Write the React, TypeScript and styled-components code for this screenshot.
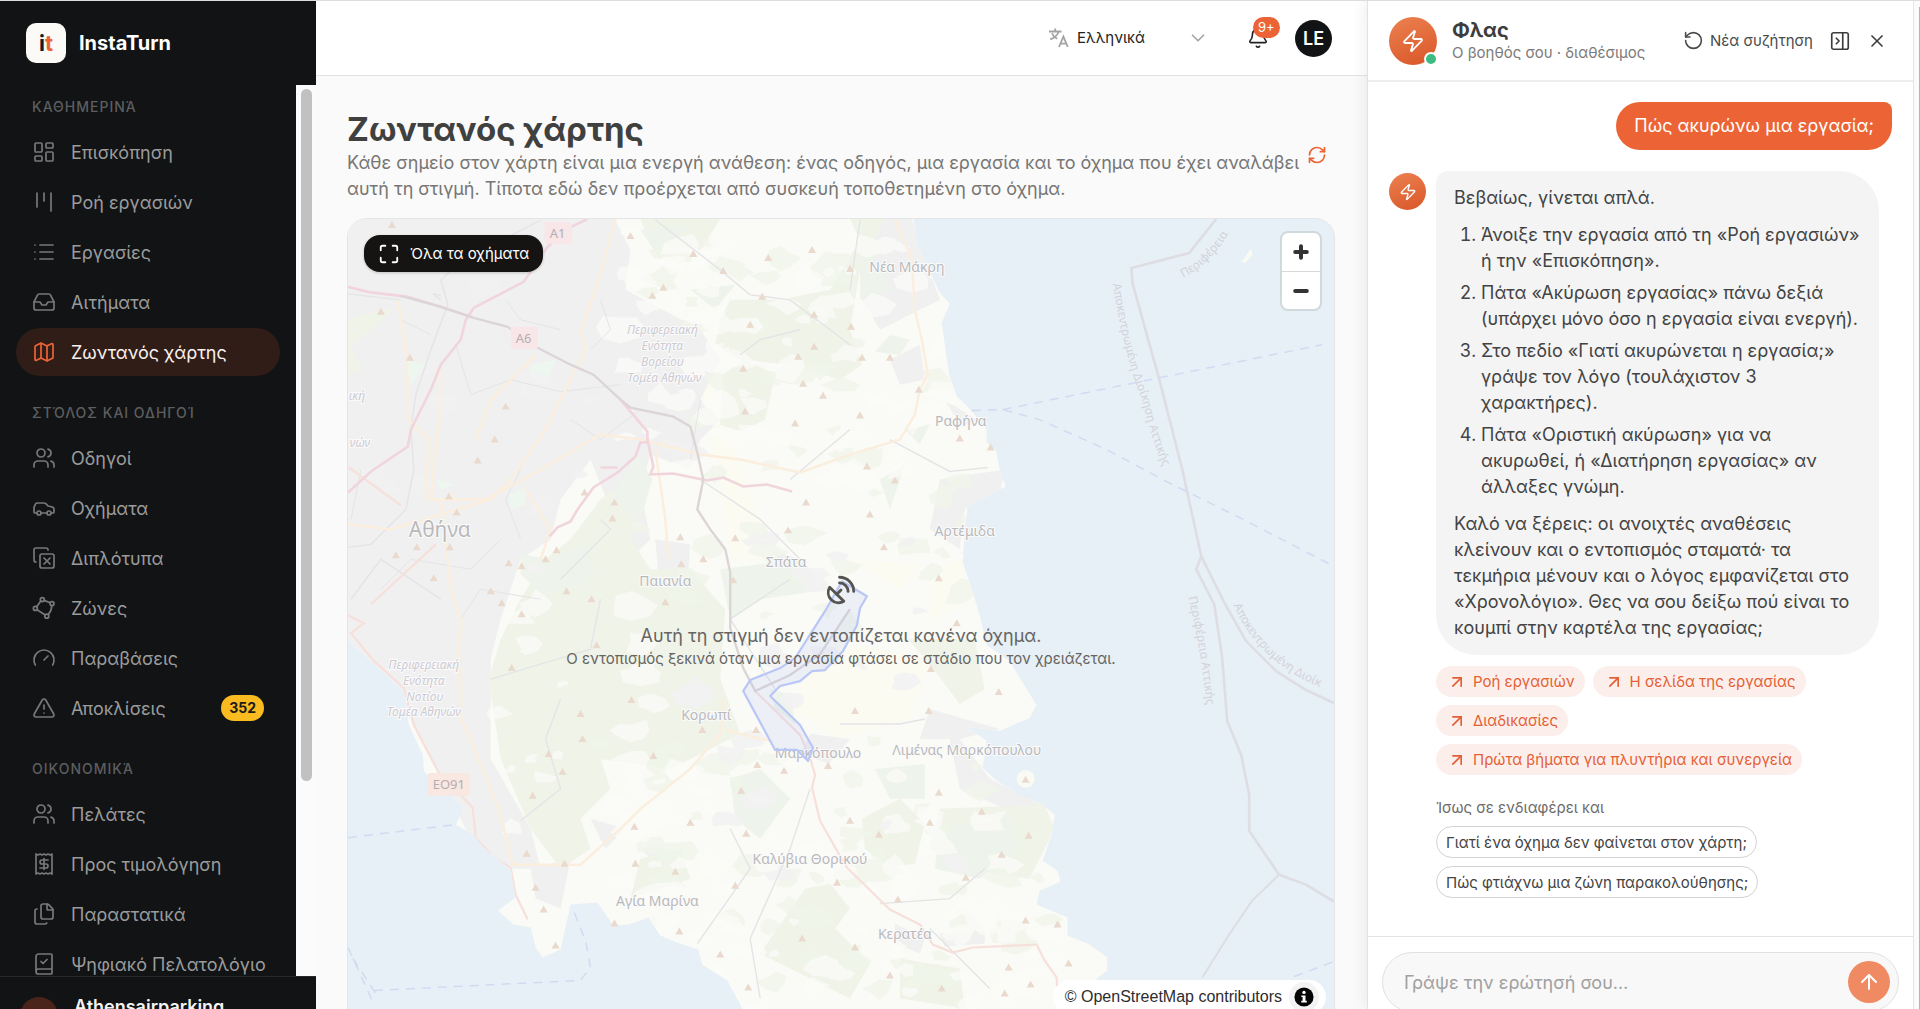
import React from "react";
import styled, { createGlobalStyle, css } from "styled-components";
import {
  ArrowUp,
  ArrowUpRight,
  Bell,
  BookCheck,
  Car,
  ChevronDown,
  CopyX,
  Files,
  Gauge,
  Inbox,
  LayoutDashboard,
  List,
  Map as MapIcon,
  Maximize,
  PanelRightClose,
  Receipt,
  RefreshCw,
  RotateCcw,
  SatelliteDish,
  TriangleAlert,
  Users,
  X,
  Zap,
} from "lucide-react";

const accent = "#ec6435";
const uiFont = `Inter, "Open Sans", sans-serif`;

const GlobalStyle = createGlobalStyle`
  *, *::before, *::after { box-sizing: border-box; }
  body { margin: 0; font-family: ${uiFont}; font-size: 18px; color: #434343; background: #fafafa; }
  button, input, select { font: inherit; color: inherit; margin: 0; }
  button { border: 0; padding: 0; background: none; cursor: pointer; }
  h1, h2, p, ol, ul { margin: 0; padding: 0; }
  a { color: inherit; text-decoration: none; }
  svg { flex: none; display: block; }
`;

/* ---------- frame ---------- */

const Shell = styled.div`
  display: flex;
  height: 100vh;
  overflow: hidden;
  border-top: 1px solid #dcdedd;
`;

/* ---------- sidebar ---------- */

const Sidebar = styled.aside`
  flex: 0 0 316px;
  min-width: 0;
  display: flex;
  flex-direction: column;
  background: #111315;
  color: #9b9b9c;
`;

const Brand = styled.a`
  flex: 0 0 84px;
  display: flex;
  align-items: center;
  gap: 13px;
  padding: 0 26px;
  font-size: 20px;
  font-weight: 700;
  color: #fff;
`;

const BrandMark = styled.span`
  display: grid;
  grid-auto-flow: column;
  place-content: center;
  width: 40px;
  height: 40px;
  border-radius: 10px;
  background: #fbfaf7;
  color: #16182a;
  font-size: 22px;
  line-height: 24px;
`;

const BrandAccent = styled.span`
  color: ${accent};
`;

const NavScroll = styled.div`
  flex: 1;
  min-height: 0;
  display: flex;
`;

const Nav = styled.nav`
  flex: 1;
  min-width: 0;
  overflow: hidden;
  display: flex;
  flex-direction: column;
  gap: 15px;
  padding: 0 16px;
`;

const Track = styled.div`
  flex: 0 0 20px;
  padding: 4px 4px 0 5px;
  background: #fbfbfb;
`;

const Thumb = styled.div`
  height: 78%;
  border-radius: 6px;
  background: #c1c1c1;
`;

const SectionTitle = styled.h2`
  padding-left: 16px;
  font-size: 14px;
  font-weight: 500;
  line-height: 43px;
  letter-spacing: 1px;
  color: #5d5e5f;
`;

const NavList = styled.ul`
  display: grid;
  gap: 2px;
  list-style: none;
`;

const NavLink = styled.a<{ $active?: boolean }>`
  display: flex;
  align-items: center;
  gap: 15px;
  height: 48px;
  padding: 0 16px;
  border-radius: 24px;
  white-space: nowrap;
  svg { color: #77787a; }
  ${(p) =>
    p.$active &&
    css`
      background: #301d18;
      color: #f8f1ee;
      svg { color: ${accent}; }
    `}
`;

const CountPill = styled.span`
  margin-left: auto;
  padding: 0 8px;
  border-radius: 13px;
  background: #f9bb20;
  color: #1b1a16;
  font-size: 14px;
  font-weight: 700;
  line-height: 26px;
`;

const Account = styled.div`
  flex: 0 0 33px;
  display: flex;
  align-items: flex-start;
  gap: 16px;
  height: 33px;
  padding: 20px 20px 0;
  overflow: hidden;
  border-top: 1px solid #26282a;
  color: #f4f4f4;
  font-weight: 600;
  line-height: 20px;
`;

const AccountAvatar = styled.span`
  flex: none;
  width: 38px;
  height: 38px;
  border-radius: 50%;
  background: #4a231b;
`;

/* ---------- main column ---------- */

const Main = styled.main`
  flex: 1;
  min-width: 0;
  display: flex;
  flex-direction: column;
  background: #fafafa;
`;

const TopBar = styled.header`
  flex: 0 0 75px;
  display: flex;
  align-items: center;
  justify-content: flex-end;
  padding: 0 35px;
  background: #fff;
  border-bottom: 1px solid #e3e3e3;
`;

const Language = styled.label`
  display: grid;
  grid-template-columns: 28px 132px;
  align-items: center;
  margin-right: 38px;
  color: #a3a3a3;
`;

const LanguageSelect = styled.select`
  appearance: none;
  grid-row: 1;
  grid-column: 2;
  border: 0;
  padding: 0;
  background: transparent;
  color: #222;
  font-size: 15px;
  line-height: 24px;
`;

const LanguageChevron = styled(ChevronDown)`
  grid-row: 1;
  grid-column: 2;
  justify-self: end;
  pointer-events: none;
`;

const BellButton = styled.button`
  position: relative;
  margin-right: 26px;
  color: #222;
`;

const BellBadge = styled.span`
  position: absolute;
  left: 6px;
  top: -10px;
  padding: 0 5px;
  border-radius: 11px;
  background: ${accent};
  color: #fff;
  font-size: 13px;
  line-height: 21px;
`;

const UserAvatar = styled.button`
  width: 37px;
  height: 37px;
  border-radius: 50%;
  background: #111315;
  color: #fff;
  font-size: 18px;
  font-weight: 600;
`;

const Page = styled.div`
  flex: 1;
  min-height: 0;
  overflow: hidden;
  padding: 32px 32px 0 31px;
`;

const PageHead = styled.div`
  display: flex;
  align-items: center;
  justify-content: space-between;
  gap: 4px;
  padding-right: 8px;
  margin-bottom: 16px;
`;

const Title = styled.h1`
  font-size: 33px;
  font-weight: 700;
  line-height: 42px;
  color: #40403f;
`;

const Lead = styled.p`
  line-height: 26px;
  color: #777674;
`;

const IconButton = styled.button<{ $accent?: boolean }>`
  color: ${(p) => (p.$accent ? accent : "#3c3c3c")};
`;

/* ---------- map ---------- */

const MapFrame = styled.section`
  position: relative;
  height: calc(100vh - 200px);
  overflow: hidden;
  border: 1px solid #e4e6e6;
  border-radius: 20px;
  display: grid;
  place-items: center;
  background: #e7f0f6;
`;

const MapArt = styled.svg`
  position: absolute;
  inset: 0;
  width: 100%;
  height: 100%;
`;

const FitButton = styled.button`
  position: absolute;
  left: 16px;
  top: 16px;
  display: flex;
  align-items: center;
  gap: 10px;
  height: 37px;
  padding: 0 14px;
  border-radius: 16px;
  background: #161412;
  color: #fff;
  font-size: 15px;
  box-shadow: 0 1px 3px rgba(0, 0, 0, 0.2);
`;

const ZoomBox = styled.div`
  position: absolute;
  right: 12px;
  top: 12px;
  width: 42px;
  display: grid;
  border: 2px solid #d2d9dc;
  border-radius: 8px;
  background: #fff;
`;

const ZoomButton = styled.button`
  display: grid;
  place-items: center;
  height: 38px;
  & + & { border-top: 1px solid #d8d8d8; }
`;

const EmptyState = styled.div`
  position: relative;
  display: grid;
  justify-items: center;
  padding-bottom: 4px;
  color: #666563;
  text-align: center;
  svg { margin-bottom: 16px; color: #555450; }
`;

const EmptyTitle = styled.p`
  line-height: 26px;
`;

const EmptyText = styled.p`
  font-size: 15px;
  line-height: 20px;
`;

const Attribution = styled.div`
  position: absolute;
  right: 8px;
  bottom: 12px;
  display: flex;
  align-items: center;
  gap: 12px;
  height: 34px;
  padding: 0 12px;
  border-radius: 17px;
  background: #fff;
  color: #2d2d2d;
  font-family: "Liberation Sans", Arial, sans-serif;
  font-size: 16px;
`;

const InfoButton = styled.button`
  border-radius: 50%;
  box-shadow: 0 0 0 5px #f3f3f3;
`;

/* ---------- assistant panel ---------- */

const Panel = styled.aside`
  flex: 0 0 553px;
  display: flex;
  background: #fff;
  border-left: 1px solid #e2e2e2;
  box-shadow: 0 0 16px rgba(0, 0, 0, 0.09);
  position: relative;
`;

const PanelColumn = styled.div`
  flex: 1;
  min-width: 0;
  display: flex;
  flex-direction: column;
`;

const PageRail = styled.div`
  flex: 0 0 7px;
  padding: 6px 0 0 5px;
  border-left: 1px solid #e4e4e4;
  background: #fbfbfb;
`;

const PageRailThumb = styled.div`
  height: 100%;
  border-left: 1px solid #b4b4b4;
`;

const PanelHead = styled.header`
  flex: 0 0 81px;
  display: flex;
  align-items: center;
  padding: 0 26px 0 21px;
  border-bottom: 2px solid #eeeeee;
`;

const BotAvatar = styled.span<{ $size: number }>`
  position: relative;
  flex: none;
  display: grid;
  place-items: center;
  width: ${(p) => p.$size}px;
  height: ${(p) => p.$size}px;
  border-radius: 50%;
  background: linear-gradient(160deg, #ec8150, #d95628);
  color: #fff;
`;

const OnlineDot = styled.span`
  position: absolute;
  right: -1px;
  bottom: -1px;
  width: 14px;
  height: 14px;
  border: 2px solid #fff;
  border-radius: 50%;
  background: #3dbb83;
`;

const BotNames = styled.div`
  flex: 1;
  margin-left: 15px;
  white-space: nowrap;
`;

const BotName = styled.h2`
  font-size: 20px;
  line-height: 24px;
  font-weight: 700;
  color: #3d3d3d;
`;

const BotStatus = styled.p`
  font-size: 15px;
  line-height: 22px;
  color: #7c7b79;
`;

const PanelActions = styled.div`
  display: flex;
  align-items: center;
  gap: 16px;
`;

const NewChat = styled.button`
  display: flex;
  align-items: center;
  gap: 6px;
  color: #4a4a4a;
  font-size: 15px;
`;

const Thread = styled.div`
  flex: 1;
  min-height: 0;
  overflow: hidden;
  display: flex;
  flex-direction: column;
  gap: 21px;
  padding: 20px 21px;
`;

const UserBubble = styled.p`
  align-self: flex-end;
  padding: 11px 18px;
  border-radius: 24px 8px 24px 24px;
  background: ${accent};
  color: #fff;
  line-height: 26px;
`;

const BotTurn = styled.div`
  display: flex;
  align-items: flex-start;
  gap: 10px;
  > :first-child { margin-top: 2px; }
`;

const BotContent = styled.div`
  flex: 1;
  min-width: 0;
`;

const BotBubble = styled.div`
  display: grid;
  gap: 11px;
  margin-right: 13px;
  padding: 14px 18px;
  border-radius: 12px 40px 40px 40px;
  background: #f4f4f4;
  line-height: 26px;
`;

const Steps = styled.ol`
  display: grid;
  gap: 6px;
  padding-left: 27px;
`;

const ChipRow = styled.div`
  display: flex;
  flex-wrap: wrap;
  gap: 8px;
`;

const LinkChips = styled(ChipRow)`
  margin-top: 11px;
`;

const LinkChip = styled.a`
  display: flex;
  align-items: center;
  gap: 6px;
  height: 31px;
  padding: 0 10px 0 11px;
  border-radius: 16px;
  background: #fcefeb;
  color: #e45f36;
  font-size: 15px;
`;

const SuggestLabel = styled.p`
  margin: 22px 0 7px;
  font-size: 15px;
  line-height: 22px;
  color: #6d6c6a;
`;

const SuggestChip = styled.button`
  height: 32px;
  padding: 0 9px;
  border: 1px solid #d3d3d3;
  border-radius: 16px;
  background: #fff;
  font-size: 15px;
`;

const Composer = styled.form`
  flex: 0 0 73px;
  height: 73px;
  overflow: hidden;
  padding: 15px 14px 0;
  border-top: 1px solid #e3e3e3;
`;

const ComposerField = styled.div`
  display: flex;
  align-items: center;
  height: 60px;
  padding: 0 8px 0 21px;
  border: 1px solid #e1e1e1;
  border-radius: 30px;
  background: #f8f8f8;
`;

const ComposerInput = styled.input`
  flex: 1;
  min-width: 0;
  border: 0;
  outline: 0;
  padding: 0;
  background: transparent;
  &::placeholder { color: #a0a0a0; opacity: 1; }
`;

const SendButton = styled.button`
  display: grid;
  place-items: center;
  width: 42px;
  height: 42px;
  border-radius: 50%;
  background: #f08a63;
  color: #fff;
`;

/* ---------- small drawings ---------- */

const ZoneIcon = ({ size = 24, strokeWidth = 1.7 }: { size?: number; strokeWidth?: number }) => (
  <svg width={size} height={size} viewBox="0 0 24 24" fill="none" stroke="currentColor" strokeWidth={strokeWidth} strokeLinecap="round">
    <circle cx="10.3" cy="3.6" r="2" />
    <circle cx="20" cy="7.6" r="2" />
    <circle cx="14.8" cy="20.2" r="2" />
    <circle cx="3.4" cy="12.4" r="2" />
    <path d="M12.2 4.4 18 6.8M8.8 5.1 4.7 10.8M5 13.8l8.2 5.2M19.8 9.8c-.1 3.4-1.4 6.4-3.6 8.8" />
  </svg>
);

const KanbanIcon = ({ size = 24, strokeWidth = 1.7 }: { size?: number; strokeWidth?: number }) => (
  <svg width={size} height={size} viewBox="0 0 24 24" fill="none" stroke="currentColor" strokeWidth={strokeWidth} strokeLinecap="round">
    <path d="M5 3v14M12 3v8M19 3v18" />
  </svg>
);

const TranslateIcon = () => (
  <svg width="20" height="20" viewBox="0 0 20 20" fill="none" stroke="currentColor" strokeWidth="1.8">
    <path d="M0 3.5h12.5M6.2.5v3M9.8 3.5C8.6 7 5.5 9.8 1.2 11.4M3 5.2c1 2.6 2.6 4.3 5.2 5.6" />
    <path d="m10 19 4.4-10.4L18.8 19M11.4 15.6h6" />
  </svg>
);

const InfoGlyph = () => (
  <svg width="20" height="20" viewBox="0 0 20 20">
    <circle cx="10" cy="10" r="9.6" fill="#050505" />
    <circle cx="10" cy="5.4" r="1.7" fill="#fff" />
    <path d="M7.4 8.4h4.1v5.4h1.3v1.7H7.3v-1.7h1.3v-3.7H7.4z" fill="#fff" />
  </svg>
);

const ZoomGlyph = ({ minus }: { minus?: boolean }) => (
  <svg width="16" height="16" viewBox="0 0 16 16" stroke="#333" strokeWidth="4" strokeLinecap="round">
    <path d={minus ? "M2.2 8h11.6" : "M2.2 8h11.6M8 2.2v11.6"} />
  </svg>
);

/* ---------- map drawing ---------- */

const peaks: [number, number][] = [
  [391, 225], [630, 236], [693, 254], [723, 271], [768, 258], [812, 250], [652, 296], [663, 288], [762, 297], [814, 315], [750, 325],
  [814, 347], [798, 357], [743, 369], [803, 384], [823, 396], [745, 412], [795, 424], [409, 358], [380, 312], [505, 407], [494, 440],
  [477, 461], [448, 497], [456, 513], [416, 548], [449, 548], [395, 556], [433, 579], [556, 551], [545, 560], [508, 564], [521, 567],
  [584, 493], [614, 503], [612, 519], [680, 538], [681, 565], [703, 560], [735, 539], [788, 531], [806, 503], [733, 581], [490, 592],
  [566, 592], [591, 600], [665, 603], [501, 604], [850, 269], [851, 327], [862, 358], [890, 358], [919, 390], [860, 416], [960, 439],
  [991, 448], [867, 467], [895, 481], [870, 515], [884, 548], [939, 579], [521, 615], [596, 646], [511, 669], [631, 701], [580, 715],
  [582, 740], [548, 755], [653, 757], [562, 773], [532, 797], [702, 731], [756, 731], [757, 766], [784, 772], [828, 767], [741, 792],
  [634, 828], [690, 824], [746, 835], [526, 855], [564, 865], [635, 865], [675, 873], [535, 889], [543, 911], [555, 947], [614, 925],
  [679, 933], [720, 956], [802, 940], [735, 887], [837, 884], [748, 989], [957, 624], [931, 670], [999, 693], [855, 712], [929, 712],
  [939, 794], [982, 813], [930, 824], [850, 822], [879, 836], [1029, 837], [1002, 856], [966, 879], [898, 901], [855, 949], [890, 977],
  [942, 990], [1026, 922], [1058, 926], [1069, 965], [1009, 969], [1031, 986], [1005, 995], [1026, 781],
];

const places: [string, number, number, number][] = [
  ["Νέα Μάκρη", 907, 272, 14],
  ["Ραφήνα", 961, 426, 14],
  ["Αρτέμιδα", 965, 537, 14],
  ["Αθήνα", 439, 538, 21],
  ["Σπάτα", 786, 568, 14],
  ["Παιανία", 665, 587, 14],
  ["Κορωπί", 706, 721, 14],
  ["Μαρκόπουλο", 818, 759, 14],
  ["Λιμένας Μαρκόπουλου", 967, 756, 14],
  ["Καλύβια Θορικού", 810, 865, 14],
  ["Αγία Μαρίνα", 657, 907, 14],
  ["Κερατέα", 905, 940, 14],
];

const districts: [string, number, number][] = [
  ["Περιφερειακή", 662, 334], ["Ενότητα", 662, 350], ["Βορείου", 662, 366], ["Τομέα Αθηνών", 664, 382],
  ["Περιφερειακή", 423, 670], ["Ενότητα", 423, 686], ["Νοτίου", 424, 702], ["Τομέα Αθηνών", 423, 717],
];

/* Small clearings and fields, scattered from a fixed seed so that the terrain is stable between renders. */
const scatter = (seed: number, count: number, x0: number, y0: number, w: number, h: number) => {
  let s = seed;
  const next = () => {
    s = (s * 16807) % 2147483647;
    return s / 2147483647;
  };
  const shapes: string[] = [];
  for (let i = 0; i < count; i += 1) {
    const cx = x0 + next() * w;
    const cy = y0 + next() * h;
    const size = 5 + next() * 11;
    const pts: string[] = [];
    for (let k = 0; k < 8; k += 1) {
      const a = (k / 8) * Math.PI * 2;
      const r = size * (0.45 + next() * 0.9);
      pts.push(`${(cx + Math.cos(a) * r * 1.3).toFixed(1)} ${(cy + Math.sin(a) * r * 0.8).toFixed(1)}`);
    }
    shapes.push(`M${pts.join("L")}Z`);
  }
  return shapes.join("");
};

const clearings = scatter(41, 75, 620, 225, 340, 260) + scatter(7, 90, 600, 760, 480, 260) + scatter(19, 24, 500, 590, 160, 250);
const thickets = scatter(97, 60, 640, 225, 340, 400) + scatter(23, 70, 600, 740, 460, 270);
const hamlets = scatter(61, 26, 680, 440, 300, 560) + scatter(5, 16, 370, 240, 220, 360);

const Basemap = () => (
  <MapArt viewBox="347 219 988 809" preserveAspectRatio="xMidYMin slice" aria-hidden="true">
    <defs>
      <clipPath id="land">
        <path d="M340 210H913L916 240 922 255 940 293 950 304 942 323 946 353 950 377 957 397 968 407 987 430 987 443 996 450 1000 470 1006 487 987 497 968 507 965 530 963 563 973 593 980 616 987 646 1010 662 1022 682 1037 706 1030 719 1000 732 968 728 987 742 983 769 997 782 1020 796 1043 806 1055 816 1052 836 1043 862 1058 872 1061 883 1040 892 1037 906 1068 919 1068 937 1090 946 1108 959 1108 972 1097 980V1028H750L740 1006 727 982 702 966 698 951 676 944 660 937 648 919 628 926 613 927 597 904 570 906 560 951 542 959 535 949 530 929 513 926 497 912 515 899 510 871 483 849 473 836 455 826 463 809 450 796 430 780 423 772 422 756 408 726 403 692 377 669 348 642H340Z" />
      </clipPath>
      <path id="b1" d="M1113 284Q1126 360 1142 398Q1152 440 1170 482" />
      <path id="b2" d="M1184 278Q1215 262 1236 222" />
      <path id="b3" d="M1189 598Q1202 650 1208 712" />
      <path id="b4" d="M1234 606Q1262 668 1334 693" />
    </defs>
    <g clipPath="url(#land)">
      <rect x="340" y="210" width="800" height="830" fill="#fafaf6" />
      {/* farmland */}
      <g fill="#fbfbf2">
        <path d="M690 330 760 520 790 560 730 560 720 480ZM820 640 930 660 910 720 840 740 790 710ZM930 570 960 560 970 600 930 620ZM850 560 920 565 900 590Z" />
      </g>
      {/* built-up areas */}
      <g fill="#f0f0f1">
        <path d="M340 210H610L630 250 625 290 700 330 720 360 700 400 720 420 700 440 690 470 650 455 640 490 650 540 630 560 610 510 590 460 560 500 550 540 520 560 500 620 490 660 490 760 530 830 540 870 510 870 470 840 400 700 340 640Z" />
        <path d="M868 219H912L940 300 920 310 880 330 862 300 870 260ZM890 360 920 345 925 380 900 385ZM945 400 985 425 960 425ZM940 480 1005 470 1000 495 965 510 960 550 930 530ZM930 710 1000 730 960 740 990 780 1050 810 1010 812 960 790 950 740 920 740Z" />
        <path d="M655 540 690 545 685 610 660 600ZM770 550 800 560 790 580ZM690 700 725 710 715 745 690 730ZM810 735 850 740 830 765 800 755ZM940 935 985 932 985 945 945 948ZM895 925 925 940 920 955 895 945ZM530 870 570 860 560 910 535 900ZM640 850 665 845 660 870ZM590 820 625 830 605 850Z" />
      </g>
      {/* woodland and scrub */}
      <g fill="#f0f3e8">
        <path d="M730 300 780 300 830 290 860 240 850 219 885 219 860 270 850 330 862 365 840 380 790 365 740 360 715 345 720 320ZM640 219 720 219 700 250 650 245ZM722 375 745 360 775 375 765 420 740 432 720 425ZM640 470 600 500 570 540 545 560 520 600 500 640 488 680 500 760 530 830 560 870 590 850 580 820 610 790 600 760 670 770 740 735 720 680 725 610 690 570 650 570 630 540Z" />
        <path d="M805 890 830 885 850 910 835 930 870 965 850 1000 760 955ZM640 860 680 850 690 880 630 900ZM862 820 900 800 925 825 915 865 890 868 865 850ZM940 810 1045 806 1055 830 1030 880 960 870 930 850ZM340 320 395 308 370 330 350 345 360 370 340 380ZM908 640 975 640 985 690 960 705 930 665ZM900 960 960 970 965 1010 900 1000Z" />
      </g>
      <g fill="#eef4eb">
        <path d="M520 555 550 560 580 545 595 570 575 590 540 595 520 575ZM637 455 652 480 640 520 610 500ZM770 690 790 695 795 725 775 710ZM860 225 890 290 860 300ZM690 290 735 285 715 310ZM720 570 800 560 830 590 760 600 730 620ZM640 230 690 225 660 260Z" />
        <path d="M875 770 925 765 925 800 890 800ZM730 780 760 770 790 800 760 840 735 820ZM940 830 1010 815 1020 850 980 880 935 870ZM890 335 910 340 900 355 875 352ZM880 480 905 465 890 510ZM905 430 930 425 920 445Z" />
      </g>
      <g fill="#edf6ef">
        <path d="M530 365 555 360 545 385 528 375ZM508 495 525 488 525 505 510 510ZM405 360 425 365 410 385ZM435 480 455 485 440 490Z" />
      </g>
      <path d={thickets} fill="#f0f5ea" opacity="0.8" />
      <path d={clearings} fill="#fbfbf8" opacity="0.75" />
      <path d={hamlets} fill="#f1f1f2" opacity="0.8" />
      {/* minor roads and rail */}
      <g fill="none" stroke="#e4e4e6" strokeWidth="1.4">
        <path d="M347 294 400 300M540 220 460 262 440 280 447 305 430 350 415 395 410 430 413 470 405 510 370 545 347 548M440 300Q425 290 440 296M655 220 720 270 750 295 790 300 830 330 850 345M560 580 610 530 600 520M700 480 760 520 800 560M860 220 850 290M800 330 760 340 740 355M790 480 850 430M890 440 950 472 988 468M600 600 590 650 490 680M350 600 380 560 440 600M560 700 545 740 560 790 520 822" />
        <path d="M760 1000 750 940 790 850 810 790M697 945 750 870 730 830M880 905 950 900 985 870M775 690 730 620 790 580M840 725 900 725 925 720M930 930 990 990" />
        <path d="M455 345 470 395 510 380 560 392 620 385M400 320 430 335M380 590 410 560 470 570 500 540M460 620 480 590 540 600M505 300 520 320 560 330M600 300 610 330 590 350M360 470 350 520M520 470 505 500 520 540M570 420 600 440 640 410 670 415M700 400 690 460" strokeWidth="1" />
      </g>
      {/* secondary roads */}
      <g fill="none" stroke="#fbeedd" strokeWidth="2.4">
        <path d="M615 219 595 290 580 330 585 350 560 400 545 430 510 480 490 500M397 300 405 350 408 420 428 440 425 500M440 365 440 400 430 500 485 500 540 470 600 435 640 440 700 455 740 460 800 473 850 455 900 440 915 415 920 390 928 375 922 340 915 310 912 260 895 219M655 450 665 520 668 560M535 355 490 400 475 440M525 490 550 530 540 560M440 500 450 590 460 620 458 650 460 719 473 749 500 816 512 866 580 866 620 830 640 810 690 770 720 735 723 700M725 731 770 742M347 525 390 530 490 500" />
      </g>
      <g fill="none" stroke="#f7dfda" strokeWidth="2.2">
        <path d="M348 468 400 506M370 605 435 545M347 616 363 624 350 634 373 662 403 689 413 726 437 772 472 809 475 839 493 859 510 869 515 896 527 921M755 692 800 736 810 759 815 776 812 789 820 822 837 852 847 869 890 911 920 926 933 946 953 954 973 949 1037 946 1045 962 1057 979 1060 1020" />
      </g>
      {/* motorways */}
      <g fill="none" stroke="#f1d5dc" strokeWidth="2.6">
        <path d="M587 219 570 227 547 247 523 282 473 308 465 320 460 340 440 365 430 390 410 430 407 447 370 472 347 493" />
        <path d="M347 287 367 292 407 297 440 307 473 318M620 400 647 432 647 443 640 443 635 457 617 473 593 488 577 510 570 522 557 528 549 537M600 468H617M647 440 653 467 650 475 673 474 707 481 723 478 743 487 767 485 792 492" />
      </g>
      <g fill="none" stroke="#dcd5d8" strokeWidth="2.4">
        <path d="M400 296 440 307 473 318 507 327 537 348 570 365 593 375 620 400 630 408 673 417 690 427 697 453 703 480 697 510 710 530 725 550 730 573 730 629 743 669 755 692 790 676 820 655 850 610" />
      </g>
    </g>
    {/* administrative limits at sea */}
    <g fill="none" stroke="#dddde3" strokeWidth="2.6" strokeLinejoin="round">
      <path d="M1217 219 1190 253 1132 268 1133 283 1160 380 1183 470 1202 557 1197 570 1215 605 1223 659 1228 722 1242 756 1250 796 1250 832 1280 876 1307 886 1335 903M1202 557 1227 607 1247 642 1277 672 1307 691 1335 704" />
      <path d="M1280 876 1253 902 1230 936 1203 979" strokeWidth="2" />
    </g>
    {/* ferry lines */}
    <g fill="none" stroke="#d0dbf1" strokeWidth="1.5" strokeDasharray="9 7">
      <path d="M972 411 1003 410 1040 420 1107 450 1167 482 1240 518 1335 567M1003 410 1323 345" />
      <path d="M347 839 453 826M373 992 580 982 590 969 585 942 573 912M347 949 373 1006M352 960 378 1000M1295 978 1335 963" />
    </g>
    <path d="M1242 262 1252 249 1253 255 1246 263Z" fill="#fafaf5" />
    <circle cx="1026" cy="780" r="9" fill="#fafaf5" />
    <g fill="#ead9cd">
      {peaks.map(([x, y]) => (
        <path key={`${x}-${y}`} d={`M${x - 4} ${y + 3}L${x} ${y - 4}L${x + 4} ${y + 3}Z`} />
      ))}
    </g>
    {/* road shields */}
    <g fontFamily="Noto Sans, sans-serif" fontSize="13" fill="#b5aeb1" textAnchor="middle">
      <rect x="544" y="222" width="27" height="22" rx="2" fill="#f8e6e9" />
      <text x="557" y="238">A1</text>
      <rect x="510" y="327" width="27" height="22" rx="2" fill="#f8e6e9" />
      <text x="523" y="343">A6</text>
      <rect x="427" y="774" width="42" height="23" rx="2" fill="#f9e7e2" />
      <text x="448" y="790">EO91</text>
    </g>
    <g fontFamily="Noto Sans, sans-serif" textAnchor="middle" fill="#b9b9bb" stroke="#fbfbfb" strokeWidth="2" style={{ paintOrder: "stroke" }}>
      {places.map(([name, x, y, size]) => (
        <text key={name} x={x} y={y} fontSize={size}>{name}</text>
      ))}
      <g fontStyle="italic" fontSize="12" fill="#cdcad2">
        {districts.map(([name, x, y]) => (
          <text key={`${name}${y}`} x={x} y={y}>{name}</text>
        ))}
        <text x="356" y="400">ική</text>
        <text x="359" y="447">νών</text>
      </g>
    </g>
    <g fontFamily="Noto Sans, sans-serif" fontSize="12" fill="#d3d2da">
      <text><textPath href="#b1">Αποκεντρωμένη Διοίκηση Αττικής</textPath></text>
      <text><textPath href="#b2">Περιφέρεια</textPath></text>
      <text><textPath href="#b3">Περιφέρεια Αττικής</textPath></text>
      <text><textPath href="#b4">Αποκεντρωμένη Διοίκ</textPath></text>
    </g>
    {/* watched zone */}
    <path
      d="M842 582 825 612 795 659 780 669 750 681 743 692 775 751 797 751 808 762 813 749 800 726 770 697 780 687 800 682 812 672 825 671 843 652 857 626 860 609 867 597Z"
      fill="rgba(170,185,240,0.16)"
      stroke="#b9c6f6"
      strokeWidth="2.2"
      strokeLinejoin="round"
    />
  </MapArt>
);

/* ---------- page ---------- */

type Item = { label: string; icon: React.ElementType; active?: boolean; count?: number };

const sections: { title: string; items: Item[] }[] = [
  {
    title: "ΚΑΘΗΜΕΡΙΝΆ",
    items: [
      { label: "Επισκόπηση", icon: LayoutDashboard },
      { label: "Ροή εργασιών", icon: KanbanIcon },
      { label: "Εργασίες", icon: List },
      { label: "Αιτήματα", icon: Inbox },
      { label: "Ζωντανός χάρτης", icon: MapIcon, active: true },
    ],
  },
  {
    title: "ΣΤΌΛΟΣ ΚΑΙ ΟΔΗΓΟΊ",
    items: [
      { label: "Οδηγοί", icon: Users },
      { label: "Οχήματα", icon: Car },
      { label: "Διπλότυπα", icon: CopyX },
      { label: "Ζώνες", icon: ZoneIcon },
      { label: "Παραβάσεις", icon: Gauge },
      { label: "Αποκλίσεις", icon: TriangleAlert, count: 352 },
    ],
  },
  {
    title: "ΟΙΚΟΝΟΜΙΚΆ",
    items: [
      { label: "Πελάτες", icon: Users },
      { label: "Προς τιμολόγηση", icon: Receipt },
      { label: "Παραστατικά", icon: Files },
      { label: "Ψηφιακό Πελατολόγιο", icon: BookCheck },
    ],
  },
];

const steps = [
  "Άνοιξε την εργασία από τη «Ροή εργασιών» ή την «Επισκόπηση».",
  "Πάτα «Ακύρωση εργασίας» πάνω δεξιά (υπάρχει μόνο όσο η εργασία είναι ενεργή).",
  "Στο πεδίο «Γιατί ακυρώνεται η εργασία;» γράψε τον λόγο (τουλάχιστον 3 χαρακτήρες).",
  "Πάτα «Οριστική ακύρωση» για να ακυρωθεί, ή «Διατήρηση εργασίας» αν άλλαξες γνώμη.",
];

const links = ["Ροή εργασιών", "Η σελίδα της εργασίας", "Διαδικασίες", "Πρώτα βήματα για πλυντήρια και συνεργεία"];

const suggestions = ["Γιατί ένα όχημα δεν φαίνεται στον χάρτη;", "Πώς φτιάχνω μια ζώνη παρακολούθησης;"];

export default function App() {
  return (
    <Shell>
      <GlobalStyle />
      <Sidebar>
        <Brand href="#">
          <BrandMark>
            i<BrandAccent>t</BrandAccent>
          </BrandMark>
          InstaTurn
        </Brand>
        <NavScroll>
          <Nav>
            {sections.map((section) => (
              <div key={section.title}>
                <SectionTitle>{section.title}</SectionTitle>
                <NavList>
                  {section.items.map(({ label, icon: Icon, active, count }) => (
                    <li key={label}>
                      <NavLink href="#" $active={active}>
                        <Icon size={24} strokeWidth={1.7} />
                        {label}
                        {count && <CountPill>{count}</CountPill>}
                      </NavLink>
                    </li>
                  ))}
                </NavList>
              </div>
            ))}
          </Nav>
          <Track>
            <Thumb />
          </Track>
        </NavScroll>
        <Account>
          <AccountAvatar />
          Athensairparking
        </Account>
      </Sidebar>

      <Main>
        <TopBar>
          <Language>
            <TranslateIcon />
            <LanguageSelect aria-label="Γλώσσα" defaultValue="el">
              <option value="el">Ελληνικά</option>
              <option value="en">English</option>
            </LanguageSelect>
            <LanguageChevron size={22} strokeWidth={1.8} />
          </Language>
          <BellButton aria-label="Ειδοποιήσεις">
            <Bell size={22} strokeWidth={1.8} />
            <BellBadge>9+</BellBadge>
          </BellButton>
          <UserAvatar>LE</UserAvatar>
        </TopBar>
        <Page>
          <PageHead>
            <div>
              <Title>Ζωντανός χάρτης</Title>
              <Lead>
                Κάθε σημείο στον χάρτη είναι μια ενεργή ανάθεση: ένας οδηγός, μια εργασία και το όχημα που έχει αναλάβει
                αυτή τη στιγμή. Τίποτα εδώ δεν προέρχεται από συσκευή τοποθετημένη στο όχημα.
              </Lead>
            </div>
            <IconButton $accent aria-label="Ανανέωση">
              <RefreshCw size={20} strokeWidth={2} />
            </IconButton>
          </PageHead>
          <MapFrame>
            <Basemap />
            <EmptyState>
              <SatelliteDish size={34} strokeWidth={2} />
              <EmptyTitle>Αυτή τη στιγμή δεν εντοπίζεται κανένα όχημα.</EmptyTitle>
              <EmptyText>Ο εντοπισμός ξεκινά όταν μια εργασία φτάσει σε στάδιο που τον χρειάζεται.</EmptyText>
            </EmptyState>
            <FitButton>
              <Maximize size={22} strokeWidth={2} />
              Όλα τα οχήματα
            </FitButton>
            <ZoomBox>
              <ZoomButton aria-label="Μεγέθυνση">
                <ZoomGlyph />
              </ZoomButton>
              <ZoomButton aria-label="Σμίκρυνση">
                <ZoomGlyph minus />
              </ZoomButton>
            </ZoomBox>
            <Attribution>
              <a href="#">© OpenStreetMap contributors</a>
              <InfoButton aria-label="Πληροφορίες χάρτη">
                <InfoGlyph />
              </InfoButton>
            </Attribution>
          </MapFrame>
        </Page>
      </Main>

      <Panel>
        <PanelColumn>
          <PanelHead>
            <BotAvatar $size={48}>
              <Zap size={24} strokeWidth={1.8} />
              <OnlineDot />
            </BotAvatar>
            <BotNames>
              <BotName>Φλας</BotName>
              <BotStatus>Ο βοηθός σου · διαθέσιμος</BotStatus>
            </BotNames>
            <PanelActions>
              <NewChat>
                <RotateCcw size={21} strokeWidth={1.8} />
                Νέα συζήτηση
              </NewChat>
              <IconButton aria-label="Σύμπτυξη">
                <PanelRightClose size={22} strokeWidth={1.8} />
              </IconButton>
              <IconButton aria-label="Κλείσιμο">
                <X size={20} strokeWidth={2} />
              </IconButton>
            </PanelActions>
          </PanelHead>
          <Thread>
            <UserBubble>Πώς ακυρώνω μια εργασία;</UserBubble>
            <BotTurn>
              <BotAvatar $size={37}>
                <Zap size={18} strokeWidth={1.8} />
              </BotAvatar>
              <BotContent>
                <BotBubble>
                  <p>Βεβαίως, γίνεται απλά.</p>
                  <Steps>
                    {steps.map((step) => (
                      <li key={step}>{step}</li>
                    ))}
                  </Steps>
                  <p>
                    Καλό να ξέρεις: οι ανοιχτές αναθέσεις κλείνουν και ο εντοπισμός σταματά· τα τεκμήρια μένουν και ο
                    λόγος εμφανίζεται στο «Χρονολόγιο». Θες να σου δείξω πού είναι το κουμπί στην καρτέλα της εργασίας;
                  </p>
                </BotBubble>
                <LinkChips>
                  {links.map((link) => (
                    <LinkChip key={link} href="#">
                      <ArrowUpRight size={20} strokeWidth={2} />
                      {link}
                    </LinkChip>
                  ))}
                </LinkChips>
                <SuggestLabel>Ίσως σε ενδιαφέρει και</SuggestLabel>
                <ChipRow>
                  {suggestions.map((text) => (
                    <SuggestChip key={text}>{text}</SuggestChip>
                  ))}
                </ChipRow>
              </BotContent>
            </BotTurn>
          </Thread>
          <Composer>
            <ComposerField>
              <ComposerInput aria-label="Ερώτηση" placeholder="Γράψε την ερώτησή σου…" />
              <SendButton type="button" aria-label="Αποστολή">
                <ArrowUp size={24} strokeWidth={2} />
              </SendButton>
            </ComposerField>
          </Composer>
        </PanelColumn>
        <PageRail>
          <PageRailThumb />
        </PageRail>
      </Panel>
    </Shell>
  );
}
